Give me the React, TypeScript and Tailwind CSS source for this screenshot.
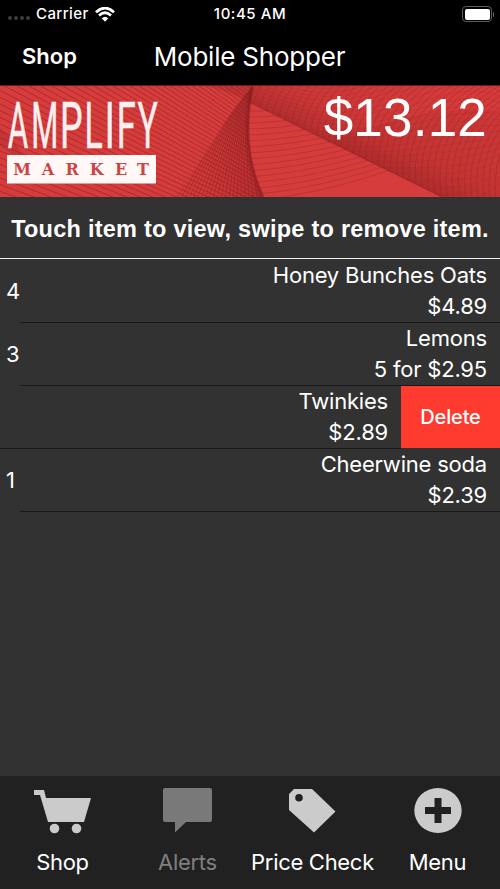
import React from "react";

const range = (n: number) => Array.from({ length: n }, (_, i) => i);

const ui = "font-[Inter,'Liberation_Sans',sans-serif]";

function StatusBar() {
  return (
    <div className="flex h-[28px] items-center pl-2 pr-[6px] text-[15px] font-medium leading-[28px]">
      <div className="flex flex-1 items-center">
        <div className="flex gap-[2px] pt-[7px]">
          {range(4).map((i) => (
            <span key={i} className="size-[4px] rounded-full bg-[#3d3d3d]" />
          ))}
        </div>
        <span className="ml-[6px] w-[59px] whitespace-nowrap tracking-[0.4px]">Carrier</span>
        <svg className="h-[15px] w-[20px]" viewBox="0 0 20 15" fill="none" stroke="white">
          <path d="M1 5.2Q10-3 19 5.2" strokeWidth="2.8" />
          <path d="M4 8.5Q10 3 16 8.5" strokeWidth="2.7" />
          <path d="M6.7 11.3Q10 8.2 13.3 11.3L10 14.7Z" fill="white" stroke="none" />
        </svg>
      </div>
      <span className="-ml-px mr-px tracking-[0.55px]">10:45 AM</span>
      <div className="flex flex-1 items-center justify-end">
        <div className="h-[16px] w-[30px] rounded-[4px] border-[1.5px] border-[#5c5c5c] p-[1.5px]">
          <div className="size-full rounded-[2px] bg-white" />
        </div>
        <span className="ml-px h-[5px] w-px rounded-r bg-[#666]" />
      </div>
    </div>
  );
}

function NavBar() {
  return (
    <div className="grid h-[57px] grid-cols-[1fr_auto_1fr] items-center">
      <span className="pl-[22px] text-[22px] font-semibold">Shop</span>
      <h1 className="mr-px text-[26px] font-normal tracking-[-0.22px]">Mobile Shopper</h1>
      <span />
    </div>
  );
}

function Guilloche() {
  return (
    <svg className="absolute inset-0 size-full" viewBox="0 0 500 111" preserveAspectRatio="none">
      <defs>
        <linearGradient id="fan" x1="0.36" y1="0" x2="0.52" y2="0">
          <stop offset="0" stopColor="#9b2425" stopOpacity="0" />
          <stop offset="0.5" stopColor="#86191c" stopOpacity="0.1" />
          <stop offset="1" stopColor="#86191c" stopOpacity="0.38" />
        </linearGradient>
        <linearGradient id="band" gradientUnits="userSpaceOnUse" x1="345" y1="63" x2="392" y2="-31">
          <stop offset="0" stopColor="#7e1a1d" stopOpacity="0.4" />
          <stop offset="0.25" stopColor="#8e2022" stopOpacity="0.16" />
          <stop offset="1" stopColor="#a62a2b" stopOpacity="0.02" />
        </linearGradient>
        <clipPath id="leftClip"><path d="M0 0H253Q240 62 263 111H0Z" /></clipPath>
        <clipPath id="fanClip"><path d="M177 111L222 41Q236 18 253 0Q240 62 263 111Z" /></clipPath>
        <clipPath id="lensClip"><path d="M249 15L442 111H263Q242 62 249 15Z" /></clipPath>
        <clipPath id="rightClip"><path d="M252 0H500V111H442L249 16Z" /></clipPath>
      </defs>
      <rect width="500" height="111" fill="#d63d3c" />
      <g clipPath="url(#leftClip)" fill="none" stroke="#942526" strokeWidth="0.95" opacity="0.66">
        {range(58).map((i) => {
          const end = 10 + 4 * i;
          const start = end - 280 * (0.8 - 0.0105 * i);
          return <path key={i} d={`M-20 ${start}Q120 ${(start + end) / 2 + 5} 260 ${end}`} />;
        })}
      </g>
      <path d="M0 42Q17 54 28 80L0 60Z" fill="#8e2022" opacity="0.22" />
      <g clipPath="url(#fanClip)">
        <rect x="0" width="500" height="111" fill="url(#fan)" />
        <g fill="none" stroke="#8c2023" strokeWidth="0.85" opacity="0.55">
          {range(23).map((i) => (
            <path key={i} d={`M${177 + i * 4} 112Q${213 + i * 1.7} 50 ${246 + i * 0.4} -4`} />
          ))}
        </g>
      </g>
      <path d="M207 0Q236 7 250 17L252 0Z" fill="#8e2022" opacity="0.28" />
      <g clipPath="url(#lensClip)" fill="none" stroke="#a52c2d" strokeWidth="0.9" opacity="0.6">
        {range(16).map((i) => (
          <path key={i} d={`M242 ${25 + i * 6}Q${290 + i * 2} ${27 + i * 5.6} ${385 + i * 2} ${6 + i * 4.6}`} />
        ))}
      </g>
      <path d="M252 0Q239 62 262 111" fill="none" stroke="#851b1f" strokeWidth="5" opacity="0.25" />
      <path d="M252 0Q240 62 263 111" fill="none" stroke="#851b1f" strokeWidth="1.8" opacity="0.5" />
      <g clipPath="url(#rightClip)">
        <path d="M249 16V0H500V111H442Z" fill="url(#band)" />
        <path d="M330 56Q415 20 500 24V111H442Z" fill="#8e2022" opacity="0.1" />
        <g fill="none" stroke="#932324" strokeWidth="0.9" opacity="0.42">
          {range(44).map((i) => (
            <path key={i} d={`M${262 + i * 8} -2Q${236 + i * 6.4} 40 ${262 + i * 6} 114`} />
          ))}
        </g>
        <g fill="none" stroke="#932324" strokeWidth="0.7" opacity="0.26">
          {range(27).map((i) => (
            <path key={i} d={`M248 ${-24 + i * 4}Q330 ${25 + i * 3} 405 ${-32 + i * 6}T505 ${-30 + i * 5}`} />
          ))}
        </g>
      </g>
      <path d="M249 16L442 111" stroke="#8a2022" strokeWidth="1.4" opacity="0.4" />
    </svg>
  );
}

function Logo() {
  const letters: [string, string][] = [
    ["A", "translate(7.8 61.5) scale(0.49 1)"],
    ["M", "translate(31.2 61.5) scale(0.485 1)"],
    ["P", "translate(60 61.5) scale(0.56 1)"],
    ["L", "translate(84.6 61.5) scale(0.53 1)"],
    ["I", "translate(104.6 61.5) scale(0.6 1)"],
    ["F", "translate(116.8 61.5) scale(0.54 1)"],
    ["Y", "translate(137.6 61.5) scale(0.53 1)"],
  ];
  return (
    <svg className="absolute left-0 top-0 h-[111px] w-[170px]" viewBox="0 0 170 111" role="img">
      <g fill="#ffefee" fontFamily="Roboto, sans-serif" fontSize="64" fontWeight="400" stroke="#ffefee" strokeWidth="0.5">
        {letters.map(([c, t]) => (
          <text key={c} transform={t}>{c}</text>
        ))}
      </g>
      <rect x="7" y="69" width="149" height="28.5" fill="#fff8f7" />
      <text x="13.2 41.8 65.5 89.8 115 137" y="88.8" fill="#cc4544" fontFamily="'DejaVu Serif', serif" fontWeight="700" fontSize="16">MARKET</text>
    </svg>
  );
}

type Item = { qty?: string; name: string; price: string; remove?: boolean };
const items: Item[] = [
  { qty: "4", name: "Honey Bunches Oats", price: "$4.89" },
  { qty: "3", name: "Lemons", price: "5 for $2.95" },
  { name: "Twinkies", price: "$2.89", remove: true },
  { qty: "1", name: "Cheerwine soda", price: "$2.39" },
];

function Row({ item }: { item: Item }) {
  return (
    <div className="flex h-[63px]">
      <span className="flex w-5 items-center pl-[6px] text-[22px]">{item.qty}</span>
      <div className={`flex flex-1 flex-col items-end border-b border-[#191919] pr-[13px] text-[22px] leading-[31px] tracking-[-0.2px] ${item.remove ? "-ml-5" : ""}`}>
        <span>{item.name}</span>
        <span>{item.price}</span>
      </div>
      {item.remove && (
        <button className="mb-px flex w-[99px] items-center justify-center bg-[#ff3b30] text-[20px] font-medium tracking-[-0.15px]">Delete</button>
      )}
    </div>
  );
}

const icons = {
  shop: (
    <>
      <path d="M0 2H10L12 10H57L50 34H14L6 7H0Z" />
      <circle cx="20.5" cy="40.5" r="4.8" /><circle cx="42.5" cy="40.5" r="4.8" />
    </>
  ),
  alerts: <path d="M2 0H47Q49 0 49 2V32Q49 34 47 34H23L12 44.5V34H2Q0 34 0 32V2Q0 0 2 0Z" />,
  price: <path fillRule="evenodd" d="M5 1H23L46.5 23.5L25 44.5L0 22V6ZM10 6A3.8 3.8 0 1 0 10 13.6A3.8 3.8 0 1 0 10 6Z" />,
  menu: <path fillRule="evenodd" d="M24 0A23.7 22.5 0 1 0 24 45A23.7 22.5 0 1 0 24 0ZM20.5 10H27.5V19H37V26H27.5V35H20.5V26H11V19H20.5Z" />,
};

function Tab({ icon, w, label, muted }: { icon: React.ReactNode; w: number; label: string; muted?: boolean }) {
  return (
    <button className={`flex flex-col items-center pt-[12px] ${muted ? "text-[#7f7f7f]" : "text-white"}`}>
      <svg width={w} height="46" viewBox={`0 0 ${w} 46`} className={muted ? "fill-[#797979]" : "fill-[#cbcbcb]"}>{icon}</svg>
      <span className="mt-[13px] whitespace-nowrap text-[22px] leading-[30px] tracking-[-0.3px]">{label}</span>
    </button>
  );
}

export default function App() {
  return (
    <main className={`flex h-[889px] w-[500px] flex-col overflow-hidden bg-[#323232] text-white ${ui}`}>
      <header className="bg-black"><StatusBar /><NavBar /></header>
      <section className="relative h-[112px] shrink-0 border-t border-[#651d1d] bg-[#d63d3c]">
        <Guilloche />
        <Logo />
        <div className="relative pr-[13px] pt-px text-right font-['Liberation_Sans',sans-serif] text-[53px] leading-[62px] tracking-[0.2px]">$13.12</div>
      </section>
      <p className="mb-px flex h-[62px] shrink-0 items-center justify-center whitespace-nowrap border-b border-[#f0f0f0] pt-[4px] font-['Liberation_Sans',sans-serif] text-[23.5px] font-bold tracking-[0.25px]">Touch item to view, swipe to remove item.</p>
      <section className="flex-1">{items.map((item) => <Row key={item.name} item={item} />)}</section>
      <nav className="grid h-[113px] shrink-0 grid-cols-4 bg-[#212121]">
        <Tab icon={icons.shop} w={57} label="Shop" />
        <Tab icon={icons.alerts} w={49} label="Alerts" muted />
        <Tab icon={icons.price} w={47} label="Price Check" />
        <Tab icon={icons.menu} w={48} label="Menu" />
      </nav>
    </main>
  );
}
